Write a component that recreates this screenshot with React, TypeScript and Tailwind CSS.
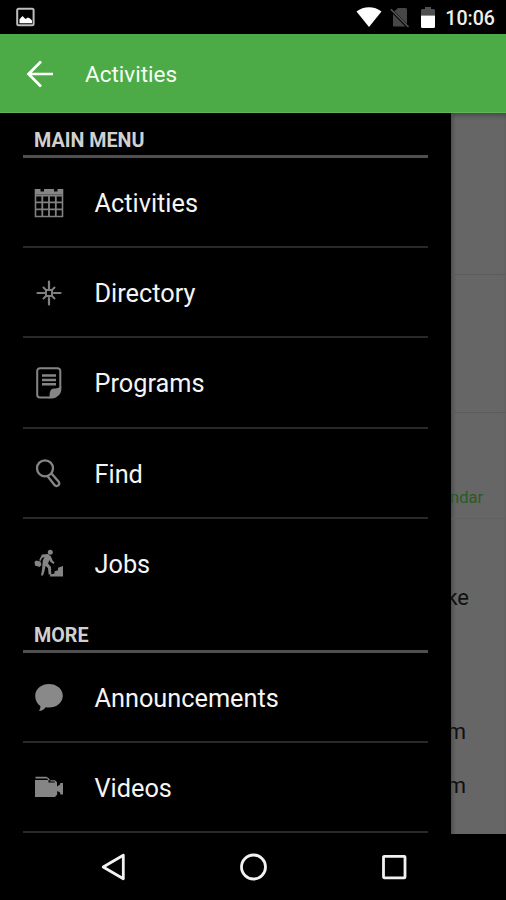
import type { ReactNode } from "react";

const ActivitiesIcon = () => (
  <svg width="30" height="30" viewBox="0 0 30 30" fill="none" stroke="#808080">
    <path d="M1.500 1v27.500h27V1" strokeWidth="1.600" />
    <path d="M1 1h5.500v2.500h3.500V1h10v2.500h3.500V1H29v5.500H1z" fill="#858585" stroke="none" />
    <path d="M1 7.500h28M1.500 14.300h27M1.500 21.300h27M8.300 7v21.500M15 7v21.500M21.800 7v21.500" strokeWidth="1.800" />
  </svg>
);

const DirectoryIcon = () => (
  <svg width="30" height="30" viewBox="0 0 30 30" fill="none" stroke="#808080" strokeLinecap="round">
    <path d="M15 3.500v7M15 20v6.500M3.500 15h7M20 15h6.500" strokeWidth="2.200" />
    <path d="M9.500 9.500l2.500 2.500M20.500 9.500l-2.500 2.500M9.500 20.500l2.500-2.500M20.500 20.500l-2.500-2.500" strokeWidth="2" />
    <path d="M12 12h6v6h-6z" strokeWidth="2" />
  </svg>
);

const ProgramsIcon = () => (
  <svg width="30" height="34" viewBox="0 0 30 34" fill="none" stroke="#858585">
    <path d="M16 31.500H6a2.800 2.800 0 0 1-2.800-2.800V5a2.800 2.800 0 0 1 2.800-2.800h17.500A2.800 2.800 0 0 1 26.300 5v17" strokeWidth="2" />
    <path d="M8 9.500h14M8 13.900h14M8 18.300h14" strokeWidth="2.500" />
    <path d="M15.500 32.400c0-6 .5-9.900 4.500-9.900 2.500 0 4.900-.5 6.700-2l.6.500V24c0 4-5 8.400-9 8.400z" fill="#858585" stroke="none" />
  </svg>
);

const FindIcon = () => (
  <svg width="30" height="30" viewBox="0 0 30 30" fill="none" stroke="#858585" strokeWidth="2.300">
    <circle cx="11" cy="10.300" r="8" />
    <path d="M13.800 18.500l6.500 8.300c1 1.300 2.700 1.500 3.900.6 1.200-1 1.400-2.600.3-3.900l-6.800-7.700" />
  </svg>
);

const JobsIcon = () => (
  <svg width="30" height="30" viewBox="0 0 30 30" fill="#858585">
    <circle cx="16.300" cy="4.200" r="2.500" />
    <path d="M8 6.500L14 6l3 2.500 1.500 4 2 2-.7 1.500-3.300-2-1-2-1.500 3.500 3 3.500.3 7.500h-2.600L14 20l-2.500-2-1 5-1.500 4.500H7L8 22l.8-9.500L10.500 9 8 10l-1.500 3-1.400-.7z" />
    <path d="M2 12.500l4.500 1L7.500 17 5.500 19 1 17.500.5 14z" />
    <path d="M16 28.500v-2l4.500-1v-2.200l3.500-1v-2.600l5-1.700v10.500z" />
  </svg>
);

const AnnouncementsIcon = () => (
  <svg width="30" height="30" viewBox="0 0 30 30" fill="#898989">
    <path d="M15 1C22.500 1 28.800 5.800 28.800 12.700S22.500 24.500 15 24.500c-1.200 0-2.300-.1-3.300-.3C10.200 26.500 7.700 28 4.800 28c1.200-1.200 1.800-3 1.500-5C3.200 21 1.200 17.300 1.200 12.700 1.200 5.800 7.500 1 15 1z" />
  </svg>
);

const VideosIcon = () => (
  <svg width="30" height="30" viewBox="0 0 30 30" fill="#858585">
    <path d="M1.500 3.700h11l2.500 1.800 1 1.700h-1.500L13 5.500H1.500z" />
    <path d="M1 7h13.500v2.500h6.300V8.500h-4.500V7.200H21l2 2v4.300l3-2 .2-1.600H29v11.500h-2.600l-.4-2-2.800-1.500v3.500L21 24H1z" />
  </svg>
);

function Section({ title, className, children }: { title: string; className: string; children: ReactNode }) {
  return (
    <section className={className}>
      <h2 className="h-[45px] border-b-[3px] border-[#505050] pt-3 pl-[11.500px] text-[19.700px] leading-8 font-bold text-[#d0d0d0]">
        {title}
      </h2>
      <ul>{children}</ul>
    </section>
  );
}

function Item({ label, icon, last = false }: { label: string; icon: ReactNode; last?: boolean }) {
  return (
    <li className={`flex h-[90.200px] items-center border-b-2 pt-1 pl-[11.500px] ${last ? "border-transparent" : "border-[#292929]"}`}>
      <span className="-mt-1 flex w-[60.500px] shrink-0 pt-px">{icon}</span>
      <span className="text-[25.300px] leading-8 text-[#f5f5f5]">{label}</span>
    </li>
  );
}

export default function App() {
  return (
    <div className="flex h-[900px] w-[506px] flex-col overflow-hidden bg-black font-['Roboto',sans-serif]">
      <div className="flex h-[34px] shrink-0 items-center pr-[11px] pl-4">
        <svg width="19" height="20" viewBox="0 0 19 20" fill="none">
          <rect x="1.200" y="1.700" width="16.400" height="16.600" rx="1.500" stroke="#bdbdbd" strokeWidth="2" />
          <path d="M3.500 16.300v-4l3-3.300 3 3 2.500-1.500 2 1 2 2v2.800z" fill="#fff" />
        </svg>
        <div className="ml-auto flex items-center">
          <svg width="26" height="22" viewBox="0 0 26 22" fill="#fff">
            <path d="M.5 5.500C7.500-.2 18.500-.2 25.500 5.500L13 21z" />
          </svg>
          <svg className="ml-2" width="20" height="22" viewBox="0 0 20 22">
            <path d="M3 6.500L8 2h7.500Q17 2 17 3.500V20.500H3z" fill="#474747" />
            <path d="M1 4L19 22" stroke="#000" strokeWidth="3" />
            <path d="M.8 3.300L18.500 21" stroke="#555" strokeWidth="1.600" />
          </svg>
          <svg className="ml-[10.500px]" width="16" height="22" viewBox="0 0 16 22">
            <path d="M1 9.500V4.500Q1 3 2.500 3H5V1h6v2h2.500Q15 3 15 4.500v5z" fill="#505050" />
            <path d="M1 9.500h14V20.500q0 1.500-1.500 1.500h-11Q1 22 1 20.500z" fill="#fff" />
          </svg>
          <span className="ml-[9px] pt-[3px] text-[19.600px] leading-6 font-medium text-[#eee]">10:06</span>
        </div>
      </div>

      <header className="flex h-[79px] shrink-0 items-center border-b border-[#63b65c] bg-[#4cab46] pt-px pl-[26px]">
        <svg width="28" height="28" viewBox="0 0 28 28" fill="none" stroke="#fff" strokeWidth="2.700">
          <path d="M27 14H3M15 1.500L2.500 14 15 26.500" />
        </svg>
        <h1 className="ml-[31px] pt-px text-[22.500px] leading-8 text-[#f5fff4]">Activities</h1>
      </header>

      <main className="flex h-[720.500px] shrink-0 overflow-hidden">
        <nav className="w-[450.500px] shrink-0 px-[22.500px]">
          <Section title="MAIN MENU" className="h-[495px]">
            <Item label="Activities" icon={<ActivitiesIcon />} />
            <Item label="Directory" icon={<DirectoryIcon />} />
            <Item label="Programs" icon={<ProgramsIcon />} />
            <Item label="Find" icon={<FindIcon />} />
            <Item label="Jobs" icon={<JobsIcon />} last />
          </Section>
          <Section title="MORE" className="">
            <Item label="Announcements" icon={<AnnouncementsIcon />} />
            <Item label="Videos" icon={<VideosIcon />} />
          </Section>
        </nav>
        <div className="flex flex-1 flex-col overflow-hidden bg-linear-to-r from-[#525252] to-[#666] to-[5px] text-[#101010] shadow-[inset_0_5px_4px_-2px_#4b4b4b]">
          <div className="h-[162px] shrink-0 border-b border-[#5c5c5c]" />
          <div className="h-[138px] shrink-0 border-b border-[#5c5c5c]" />
          <div className="flex h-[106px] shrink-0 items-end justify-end border-b border-[#606060] pr-[23px] pb-2 text-[16.500px] leading-6 text-[#285b26]">ndar</div>
          <div className="flex h-[132px] shrink-0 items-center justify-end pt-[26px] pr-[37px] text-[22px] leading-7">ke</div>
          <div className="mt-[67px] flex h-[54px] shrink-0 justify-end pr-10 text-[22px] leading-7">m</div>
          <div className="flex h-[54px] shrink-0 justify-end pr-10 text-[22px] leading-7">m</div>
        </div>
      </main>

      <footer className="flex flex-1 items-center justify-between pr-[97px] pl-[100px]">
        <svg width="27" height="30" viewBox="0 0 27 30" fill="none" stroke="#f2f2f2" strokeWidth="2.800">
          <path d="M23.300 3.200v23.600L3.200 15z" strokeLinejoin="round" />
        </svg>
        <svg width="28" height="28" viewBox="0 0 28 28" fill="none" stroke="#f2f2f2" strokeWidth="2.800">
          <circle cx="14.500" cy="14" r="12" />
        </svg>
        <svg width="30" height="30" viewBox="0 0 30 30" fill="none" stroke="#f2f2f2" strokeWidth="2.800">
          <rect x="4.500" y="4.300" width="21.500" height="21.500" rx=".8" />
        </svg>
      </footer>
    </div>
  );
}
